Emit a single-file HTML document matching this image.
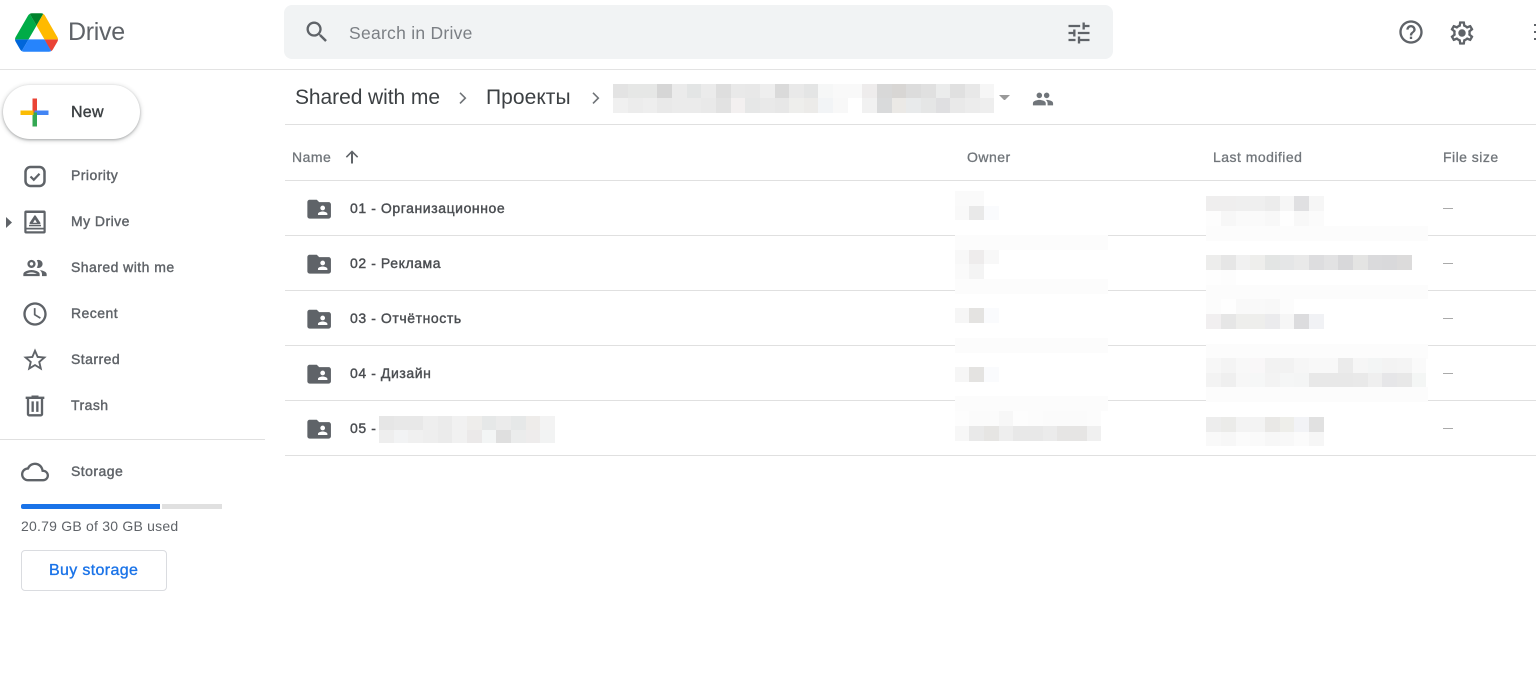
<!DOCTYPE html>
<html lang="en"><head><meta charset="utf-8"><title>Drive</title>
<style>
html,body{margin:0;padding:0;background:#fff}
body{position:relative;width:1536px;height:684px;overflow:hidden;font-family:"Liberation Sans","Noto Sans CJK SC",sans-serif;color:#5f6368}
.a{position:absolute}
.t{position:absolute;white-space:nowrap;line-height:20px;height:20px}
.n{font-size:14px;color:#5f6368;left:71px;letter-spacing:.45px;-webkit-text-stroke:.4px #5f6368}
.h{font-size:14px;color:#70757a;top:147px;letter-spacing:.47px;-webkit-text-stroke:.3px #70757a}
.f{font-size:14px;color:#4a4d51;left:350px;letter-spacing:.58px;-webkit-text-stroke:.4px #4a4d51}
.l{position:absolute;height:1px;background:#e0e0e0;left:285px;right:0}
.d{position:absolute;left:1443px;width:10px;height:1.5px;background:#aaa}
.r{position:absolute;display:flex;height:14.67px}
.r b{display:block;width:14.67px;height:100%;flex:none}
.bd{position:absolute;background:#fcfcfc;height:14.5px}
svg{position:absolute;display:block}
</style></head><body>

<svg style="left:14.5px;top:12.5px" width="43" height="39" viewBox="0 0 87.3 78"><path d="m6.6 66.85 3.85 6.65c.8 1.4 1.95 2.5 3.3 3.3l13.75-23.8h-27.5c0 1.55.4 3.1 1.2 4.5z" fill="#0066da"/><path d="m43.65 25-13.75-23.8c-1.35.8-2.5 1.9-3.3 3.3l-25.4 44a9.06 9.06 0 0 0 -1.2 4.5h27.5z" fill="#00ac47"/><path d="m73.55 76.8c1.35-.8 2.5-1.9 3.3-3.3l1.6-2.75 7.65-13.25c.8-1.4 1.2-2.95 1.2-4.5h-27.502l5.852 11.5z" fill="#ea4335"/><path d="m43.65 25 13.75-23.8c-1.35-.8-2.9-1.2-4.5-1.2h-18.5c-1.6 0-3.15.45-4.5 1.2z" fill="#00832d"/><path d="m59.8 53h-32.3l-13.75 23.8c1.35.8 2.9 1.2 4.5 1.2h50.8c1.6 0 3.15-.45 4.5-1.2z" fill="#2684fc"/><path d="m73.4 26.5-12.7-22c-.8-1.4-1.95-2.5-3.3-3.3l-13.75 23.8 16.15 28h27.45c0-1.55-.4-3.1-1.2-4.5z" fill="#ffba00"/></svg>
<div class="t" style="left:68px;top:21px;font-size:25px;line-height:22px;height:22px;color:#5f6368;letter-spacing:-.3px">Drive</div>

<div class="a" style="left:284px;top:5px;width:829px;height:54px;background:#f1f3f4;border-radius:8px"></div>
<svg style="left:302.5px;top:18px" width="28" height="28" viewBox="0 0 24 24" fill="#5f6368"><path d="M15.5 14h-.79l-.28-.27C15.41 12.59 16 11.11 16 9.5 16 5.91 13.09 3 9.5 3S3 5.91 3 9.5 5.91 16 9.5 16c1.61 0 3.09-.59 4.23-1.57l.27.28v.79l5 4.99L20.49 19l-4.99-5zm-6 0C7.01 14 5 11.99 5 9.5S7.01 5 9.5 5 14 7.01 14 9.5 11.99 14 9.5 14z"/></svg>
<div class="t" style="left:349px;top:23px;font-size:17.5px;color:#7b7f84;letter-spacing:.27px">Search in Drive</div>
<svg style="left:1065px;top:19px" width="28" height="28" viewBox="0 0 24 24" fill="#5f6368"><path d="M3 17v2h6v-2H3zM3 5v2h10V5H3zm10 16v-2h8v-2h-8v-2h-2v6h2zM7 9v2H3v2h4v2h2V9H7zm14 4v-2H11v2h10zm-6-4h2V7h4V5h-4V3h-2v6z"/></svg>
<svg style="left:1397px;top:18px" width="28" height="28" viewBox="0 0 24 24" fill="#5f6368"><path d="M11 18h2v-2h-2v2zm1-16C6.48 2 2 6.48 2 12s4.48 10 10 10 10-4.48 10-10S17.52 2 12 2zm0 18c-4.41 0-8-3.59-8-8s3.59-8 8-8 8 3.59 8 8-3.59 8-8 8zm0-14c-2.21 0-4 1.79-4 4h2c0-1.1.9-2 2-2s2 .9 2 2c0 2-3 1.75-3 5h2c0-2.25 3-2.5 3-5 0-2.21-1.79-4-4-4z"/></svg>
<svg style="left:1447.5px;top:18.5px" width="28" height="28" viewBox="0 0 24 24" fill="#5f6368"><path d="M19.43 12.98c.04-.32.07-.64.07-.98s-.03-.66-.07-.98l2.11-1.65c.19-.15.24-.42.12-.64l-2-3.46c-.12-.22-.39-.3-.61-.22l-2.49 1c-.52-.4-1.08-.73-1.69-.98l-.38-2.65C14.46 2.18 14.25 2 14 2h-4c-.25 0-.46.18-.49.42l-.38 2.65c-.61.25-1.17.59-1.69.98l-2.49-1c-.23-.09-.49 0-.61.22l-2 3.46c-.13.22-.07.49.12.64l2.11 1.65c-.04.32-.07.65-.07.98s.03.66.07.98l-2.11 1.65c-.19.15-.24.42-.12.64l2 3.46c.12.22.39.3.61.22l2.49-1c.52.4 1.08.73 1.69.98l.38 2.65c.03.24.24.42.49.42h4c.25 0 .46-.18.49-.42l.38-2.65c.61-.25 1.17-.59 1.69-.98l2.49 1c.23.09.49 0 .61-.22l2-3.46c.12-.22.07-.49-.12-.64l-2.11-1.65zm-1.98-1.71c.04.31.05.52.05.73 0 .21-.02.43-.05.73l-.14 1.13.89.7 1.08.84-.7 1.21-1.27-.51-1.04-.42-.9.68c-.43.32-.84.56-1.25.73l-1.06.43-.16 1.13-.2 1.35h-1.4l-.19-1.35-.16-1.13-1.06-.43c-.43-.18-.83-.41-1.23-.71l-.91-.7-1.06.43-1.27.51-.7-1.21 1.08-.84.89-.7-.14-1.13c-.03-.31-.05-.54-.05-.74s.02-.43.05-.73l.14-1.13-.89-.7-1.08-.84.7-1.21 1.27.51 1.04.42.9-.68c.43-.32.84-.56 1.25-.73l1.06-.43.16-1.13.2-1.35h1.39l.19 1.35.16 1.13 1.06.43c.43.18.83.41 1.23.71l.91.7 1.06-.43 1.27-.51.7 1.21-1.07.85-.89.7.14 1.13z"/><circle cx="12" cy="12" r="3.2"/></svg>
<div class="a" style="left:1534px;top:24px;width:2px;height:2px;background:#5f6368;box-shadow:0 7px 0 #5f6368,0 14px 0 #5f6368"></div>
<div class="a" style="left:0;right:0;top:69px;height:1px;background:#e3e3e3"></div>

<div class="a" style="left:3px;top:85px;width:137px;height:54px;border-radius:27px;background:#fff;box-shadow:0 1px 2px rgba(60,64,67,.3),0 1px 4px 1px rgba(60,64,67,.2)"></div>
<svg style="left:20px;top:98px" width="29" height="29" viewBox="0 0 29 29"><rect x="12.5" y="0.5" width="4.500" height="14" fill="#ea4335"/><rect x="14.5" y="12.5" width="14" height="4.500" fill="#4285f4"/><rect x="12.5" y="14.5" width="4.500" height="14" fill="#34a853"/><rect x="0.5" y="12.5" width="13" height="4.500" fill="#fbbc04"/></svg>
<div class="t" style="left:71px;top:103px;font-size:16px;color:#3c4043;letter-spacing:.25px;-webkit-text-stroke:.4px #3c4043">New</div>

<svg style="left:21px;top:162px" width="28" height="28" viewBox="0 0 28 28" fill="none" stroke="#5f6368"><rect x="4.500" y="5" width="19" height="19" rx="5" stroke-width="2.500"/><path d="M9.500 14.500l3.300 3.300 5.700-6" stroke-width="2.200"/></svg>
<div class="t n" style="top:165px">Priority</div>

<svg style="left:6px;top:217px" width="6" height="11" viewBox="0 0 6 11" fill="#5f6368"><path d="M0 0l6 5.500L0 11z"/></svg>
<svg style="left:21px;top:207.500px" width="28" height="28" viewBox="0 0 28 28"><path fill="#5f6368" fill-rule="evenodd" d="M5 2.500h18c1 0 1.700.7 1.700 1.700v19.600c0 1-.7 1.700-1.700 1.700H5c-1 0-1.700-.7-1.700-1.700V4.200c0-1 .7-1.700 1.700-1.700zM5.500 5v14.800h17V5zM5.500 21.500v1.800h17v-1.800z"/><path fill="#5f6368" stroke="#5f6368" stroke-width="1.800" stroke-linejoin="round" d="M14 8.200l4.600 7H9.400z"/><path fill="#fff" d="M14 11.500l2 3.300h-4z"/><rect x="8" y="16.800" width="12" height="1.500" fill="#5f6368"/></svg>
<div class="t n" style="top:211px">My Drive</div>

<svg style="left:21px;top:254px" width="28" height="28" viewBox="0 0 24 24" fill="#5f6368"><path d="M9 13.750c-2.340 0-7 1.170-7 3.500V19h14v-1.750c0-2.330-4.660-3.500-7-3.500zM4.340 17c.84-.58 2.870-1.250 4.660-1.250s3.820.67 4.660 1.250H4.340zM9 12c1.930 0 3.500-1.570 3.500-3.500S10.930 5 9 5 5.500 6.570 5.500 8.500 7.070 12 9 12zm0-5c.83 0 1.500.67 1.500 1.500S9.830 10 9 10s-1.500-.67-1.500-1.500S8.170 7 9 7zm7.040 6.810c1.160.84 1.960 1.960 1.960 3.440V19h4v-1.750c0-2.020-3.500-3.170-5.960-3.440zM15 12c1.930 0 3.500-1.570 3.500-3.500S16.930 5 15 5c-.54 0-1.040.13-1.500.35.63.89 1 1.980 1 3.150s-.37 2.260-1 3.150c.46.22.96.35 1.500.35z"/></svg>
<div class="t n" style="top:257px">Shared with me</div>

<svg style="left:21px;top:300px" width="28" height="28" viewBox="0 0 24 24" fill="#5f6368"><path d="M11.990 2C6.470 2 2 6.480 2 12s4.470 10 9.990 10C17.520 22 22 17.520 22 12S17.520 2 11.990 2zM12 20c-4.420 0-8-3.580-8-8s3.580-8 8-8 8 3.580 8 8-3.580 8-8 8zm.5-13H11v6l5.250 3.150.75-1.230-4.500-2.670z"/></svg>
<div class="t n" style="top:303px">Recent</div>

<svg style="left:21px;top:346px" width="28" height="28" viewBox="0 0 24 24" fill="#5f6368"><path d="M22 9.240l-7.190-.62L12 2 9.190 8.630 2 9.240l5.460 4.730L5.820 21 12 17.270 18.180 21l-1.630-7.030L22 9.240zM12 15.400l-3.760 2.270 1-4.280-3.320-2.880 4.380-.38L12 6.100l1.710 4.040 4.380.38-3.320 2.880 1 4.280L12 15.400z"/></svg>
<div class="t n" style="top:349px">Starred</div>

<svg style="left:21px;top:392px" width="28" height="28" viewBox="0 0 24 24" fill="#5f6368"><path d="M15 4V3H9v1H4v2h1v13c0 1.100.9 2 2 2h10c1.100 0 2-.9 2-2V6h1V4h-5zm2 15H7V6h10v13zM9 8h2v9H9zm4 0h2v9h-2z"/></svg>
<div class="t n" style="top:395px">Trash</div>

<div class="a" style="left:0;top:439px;width:265px;height:1px;background:#e0e0e0"></div>

<svg style="left:21px;top:458px" width="28" height="28" viewBox="0 0 24 24" fill="#5f6368"><path d="M12 6c2.620 0 4.880 1.860 5.390 4.430l.3 1.500 1.530.11c1.560.1 2.780 1.410 2.780 2.960 0 1.650-1.350 3-3 3H6c-2.210 0-4-1.790-4-4 0-2.050 1.530-3.760 3.560-3.970l1.070-.11.5-.95C8.080 7.140 9.940 6 12 6m0-2C9.110 4 6.600 5.640 5.350 8.040 2.340 8.360 0 10.910 0 14c0 3.310 2.690 6 6 6h13c2.760 0 5-2.240 5-5 0-2.640-2.050-4.780-4.650-4.960C18.670 6.590 15.640 4 12 4z"/></svg>
<div class="t n" style="top:461px">Storage</div>

<div class="a" style="left:21px;top:504px;width:138.500px;height:5px;background:#1a73e8;border-radius:2px 0 0 2px"></div>
<div class="a" style="left:162px;top:504px;width:60px;height:5px;background:#e0e0e0"></div>
<div class="t" style="left:21px;top:516px;font-size:14px;color:#5f6368;letter-spacing:.22px">20.79 GB of 30 GB used</div>
<div class="a" style="left:21px;top:550px;width:144px;height:39px;border:1px solid #dadce0;border-radius:4px"></div>
<div class="t" style="left:49px;top:560.500px;font-size:16px;color:#1a73e8;letter-spacing:.35px;-webkit-text-stroke:.35px #1a73e8">Buy storage</div>

<div class="t" style="left:295px;top:87.500px;font-size:21px;color:#3c4043;letter-spacing:-.07px">Shared with me</div>
<svg style="left:458px;top:91px" width="10" height="14" viewBox="0 0 10 14" fill="none" stroke="#6f7377" stroke-width="1.600"><path d="M2 1.800l5.300 5.300L2 12.400"/></svg>
<div class="t" style="left:486px;top:87.500px;font-size:21px;color:#3c4043;letter-spacing:.05px">Проекты</div>
<svg style="left:591px;top:91px" width="10" height="14" viewBox="0 0 10 14" fill="none" stroke="#6f7377" stroke-width="1.600"><path d="M2 1.800l5.300 5.300L2 12.400"/></svg>

<div class="r" style="left:613.3px;top:83.6px"><b style="background:#e3e3e3"></b><b style="background:#e6e7e6"></b><b style="background:#e6e7e6"></b><b style="background:#d6d6d6"></b><b style="background:#ebebeb"></b><b style="background:#e3e5e5"></b><b style="background:#ebebeb"></b><b style="background:#dedede"></b><b style="background:#e9e9e9"></b><b style="background:#e8e8e8"></b><b style="background:#eee"></b><b style="background:#dadada"></b><b style="background:#e9e9e9"></b><b style="background:#e4e5e5"></b><b style="background:#f6f7f7"></b><b style="background:#f9f9f9"></b><b style="background:#f9f9f9"></b><b style="background:#eeecec"></b><b style="background:#d8d8d8"></b><b style="background:#d8d6d4"></b><b style="background:#dcdcdc"></b><b style="background:#e0e0e0"></b><b style="background:#ebecec"></b><b style="background:#e0e0e0"></b><b style="background:#e8e8e8"></b><b style="background:#f6f6f6"></b></div>
<div class="r" style="left:613.3px;top:98.300px"><b style="background:#f0f0f0"></b><b style="background:#ececec"></b><b style="background:#eee"></b><b style="background:#e9e9e9"></b><b style="background:#ebebeb"></b><b style="background:#ebebeb"></b><b style="background:#e9e9e9"></b><b style="background:#e2e2e2"></b><b style="background:#f3f0f0"></b><b style="background:#e6e7e7"></b><b style="background:#e9e9e9"></b><b style="background:#e7e7e7"></b><b style="background:#eeeeec"></b><b style="background:#ecebe9"></b><b style="background:#f2f4f6"></b><b style="background:#f8f8f8"></b><b style="background:#fff"></b><b style="background:#f1f1f1"></b><b style="background:#d9dadb"></b><b style="background:#ebe9e6"></b><b style="background:#e8eaeb"></b><b style="background:#e5e6e6"></b><b style="background:#dfdfe1"></b><b style="background:#e9e9e9"></b><b style="background:#ececec"></b><b style="background:#eee"></b></div>

<svg style="left:999px;top:94.500px" width="11" height="5.500" viewBox="0 0 11 5.500" fill="#999"><path d="M0 0h11L5.500 5.500z"/></svg>
<svg style="left:1032px;top:87.500px" width="22" height="22" viewBox="0 0 24 24" fill="#70757a"><path d="M16 11c1.660 0 2.990-1.340 2.990-3S17.660 5 16 5c-1.660 0-3 1.340-3 3s1.340 3 3 3zm-8 0c1.660 0 2.990-1.340 2.990-3S9.660 5 8 5C6.340 5 5 6.340 5 8s1.340 3 3 3zm0 2c-2.330 0-7 1.170-7 3.500V19h14v-2.500c0-2.330-4.670-3.500-7-3.500zm8 0c-.29 0-.62.02-.97.05 1.160.84 1.970 1.970 1.970 3.450V19h6v-2.500c0-2.330-4.670-3.500-7-3.500z"/></svg>

<div class="l" style="top:124px"></div>
<div class="t h" style="left:292px">Name</div>
<svg style="left:343px;top:148px" width="18" height="18" viewBox="0 0 18 18" fill="#5f6368"><path d="M8 15.500V5.600L3.900 9.700 2.800 8.600 9 2.400l6.200 6.200-1.100 1.100L10 5.600v9.900z"/></svg>
<div class="t h" style="left:967px">Owner</div>
<div class="t h" style="left:1213px">Last modified</div>
<div class="t h" style="left:1443px">File size</div>
<div class="l" style="top:180px"></div>
<div class="l" style="top:235px"></div>
<div class="l" style="top:290px"></div>
<div class="l" style="top:345px"></div>
<div class="l" style="top:400px"></div>
<div class="l" style="top:455px"></div>

<svg style="left:305px;top:195px" width="28.300" height="28.300" viewBox="0 0 24 24" fill="#5f6368"><path d="M20 6h-8l-2-2H4c-1.100 0-2 .9-2 2v12c0 1.100.9 2 2 2h16c1.100 0 2-.9 2-2V8c0-1.100-.9-2-2-2zm-5 3c1.100 0 2 .9 2 2s-.9 2-2 2-2-.9-2-2 .9-2 2-2zm4 8h-8v-1c0-1.330 2.670-2 4-2s4 .67 4 2v1z"/></svg>
<svg style="left:305px;top:250px" width="28.300" height="28.300" viewBox="0 0 24 24" fill="#5f6368"><path d="M20 6h-8l-2-2H4c-1.100 0-2 .9-2 2v12c0 1.100.9 2 2 2h16c1.100 0 2-.9 2-2V8c0-1.100-.9-2-2-2zm-5 3c1.100 0 2 .9 2 2s-.9 2-2 2-2-.9-2-2 .9-2 2-2zm4 8h-8v-1c0-1.330 2.670-2 4-2s4 .67 4 2v1z"/></svg>
<svg style="left:305px;top:305px" width="28.300" height="28.300" viewBox="0 0 24 24" fill="#5f6368"><path d="M20 6h-8l-2-2H4c-1.100 0-2 .9-2 2v12c0 1.100.9 2 2 2h16c1.100 0 2-.9 2-2V8c0-1.100-.9-2-2-2zm-5 3c1.100 0 2 .9 2 2s-.9 2-2 2-2-.9-2-2 .9-2 2-2zm4 8h-8v-1c0-1.330 2.670-2 4-2s4 .67 4 2v1z"/></svg>
<svg style="left:305px;top:360px" width="28.300" height="28.300" viewBox="0 0 24 24" fill="#5f6368"><path d="M20 6h-8l-2-2H4c-1.100 0-2 .9-2 2v12c0 1.100.9 2 2 2h16c1.100 0 2-.9 2-2V8c0-1.100-.9-2-2-2zm-5 3c1.100 0 2 .9 2 2s-.9 2-2 2-2-.9-2-2 .9-2 2-2zm4 8h-8v-1c0-1.330 2.670-2 4-2s4 .67 4 2v1z"/></svg>
<svg style="left:305px;top:415px" width="28.300" height="28.300" viewBox="0 0 24 24" fill="#5f6368"><path d="M20 6h-8l-2-2H4c-1.100 0-2 .9-2 2v12c0 1.100.9 2 2 2h16c1.100 0 2-.9 2-2V8c0-1.100-.9-2-2-2zm-5 3c1.100 0 2 .9 2 2s-.9 2-2 2-2-.9-2-2 .9-2 2-2zm4 8h-8v-1c0-1.330 2.670-2 4-2s4 .67 4 2v1z"/></svg>

<div class="t f" style="top:198px">01 - Организационное</div>
<div class="t f" style="top:253px">02 - Реклама</div>
<div class="t f" style="top:308px">03 - Отчётность</div>
<div class="t f" style="top:363px">04 - Дизайн</div>
<div class="t f" style="top:418px">05 -</div>

<div class="r" style="left:379px;top:415.7px"><b style="background:#e6e6e6"></b><b style="background:#e8e8e8"></b><b style="background:#e8e8e8"></b><b style="background:#eee"></b><b style="background:#ebebeb"></b><b style="background:#f1f1f1"></b><b style="background:#eeedeb"></b><b style="background:#e6e8e8"></b><b style="background:#ebebeb"></b><b style="background:#e6e8e8"></b><b style="background:#eeecea"></b><b style="background:#f3f3f3"></b></div>
<div class="r" style="left:379px;top:430.3px;height:12.4px"><b style="background:#eee"></b><b style="background:#f2f3f4"></b><b style="background:#f0f0f0"></b><b style="background:#eee"></b><b style="background:#ebebeb"></b><b style="background:#f1f1f1"></b><b style="background:#ebe9e9"></b><b style="background:#f3f5f5"></b><b style="background:#dfdfdf"></b><b style="background:#ebecec"></b><b style="background:#eeecec"></b><b style="background:#f2f3f3"></b></div>

<div class="r" style="left:954.8px;top:191px"><b style="background:#fafafa"></b><b style="background:#fafafa"></b></div>
<div class="r" style="left:954.8px;top:205.7px"><b style="background:#f9f9f9"></b><b style="background:#e9e9e9"></b><b style="background:#fafbfd"></b></div>
<div class="bd" style="left:955px;width:153px;top:235px"></div>
<div class="r" style="left:954.8px;top:249.7px"><b style="background:#f8f8f8"></b><b style="background:#eeecec"></b><b style="background:#f8f8f8"></b></div>
<div class="r" style="left:954.8px;top:264.3px"><b style="background:#fafafa"></b><b style="background:#f4f4f4"></b></div>
<div class="bd" style="left:955px;width:153px;top:279px"></div>
<div class="r" style="left:954.8px;top:308.3px"><b style="background:#f6f6f6"></b><b style="background:#e4e3e1"></b><b style="background:#fafbfd"></b></div>
<div class="bd" style="left:955px;width:153px;top:338px"></div>
<div class="r" style="left:954.8px;top:367px"><b style="background:#f6f6f6"></b><b style="background:#e4e3e1"></b><b style="background:#fafbfd"></b></div>
<div class="bd" style="left:955px;width:153px;top:396.3px"></div>
<div class="r" style="left:954.8px;top:411px"><b style="background:#fdfdfd"></b><b style="background:#fbfbfb"></b><b style="background:#fbfbfb"></b><b style="background:#f7f7f7"></b><b style="background:#fdfdfd"></b><b style="background:#fcfcfc"></b><b style="background:#fbfbfb"></b><b style="background:#fbfbfb"></b><b style="background:#fbfbfb"></b><b style="background:#fcfcfc"></b></div>
<div class="r" style="left:954.8px;top:426px"><b style="background:#f7f7f7"></b><b style="background:#e9e9e9"></b><b style="background:#e6e5e3"></b><b style="background:#eee"></b><b style="background:#e8e8e8"></b><b style="background:#e8e8e8"></b><b style="background:#ebebeb"></b><b style="background:#e6e5e4"></b><b style="background:#e6e5e4"></b><b style="background:#f0f0f0"></b></div>

<div class="r" style="left:1206.4px;top:196px"><b style="background:#efeeee"></b><b style="background:#efeeee"></b><b style="background:#efefef"></b><b style="background:#efefef"></b><b style="background:#ececec"></b><b style="background:#f6f6f6"></b><b style="background:#e0e0e2"></b><b style="background:#f6f6f6"></b></div>
<div class="r" style="left:1206.4px;top:211px"><b style="background:#fdfdfd"></b><b style="background:#f7f7f7"></b><b style="background:#fafafa"></b><b style="background:#fafafa"></b><b style="background:#f8f8f8"></b><b style="background:#fefefe"></b><b style="background:#f8f8f8"></b><b style="background:#fbfbfb"></b></div>
<div class="bd" style="left:1206px;width:222px;top:226px"></div>
<div class="r" style="left:1206.4px;top:255px"><b style="background:#ededec"></b><b style="background:#e6e6e6"></b><b style="background:#f1f1f1"></b><b style="background:#eeeeec"></b><b style="background:#e3e5e4"></b><b style="background:#e5e6e7"></b><b style="background:#e9e9e9"></b><b style="background:#dddddf"></b><b style="background:#e2e2e3"></b><b style="background:#d8d8da"></b><b style="background:#e4e4e3"></b><b style="background:#dadadc"></b><b style="background:#d9d9db"></b><b style="background:#dcdbdb"></b></div>
<div class="r" style="left:1206.4px;top:270px"><b style="background:#fefefe"></b><b style="background:#fdfdfd"></b></div>
<div class="bd" style="left:1206px;width:222px;top:284.7px"></div>
<div class="r" style="left:1206.4px;top:299.3px"><b style="background:#fcfcfc"></b><b style="background:#fefefe"></b><b style="background:#f9f9f9"></b><b style="background:#f9f9f9"></b><b style="background:#f8f8f8"></b><b style="background:#fcfcfc"></b></div>
<div class="r" style="left:1206.4px;top:314px"><b style="background:#f1eff0"></b><b style="background:#e6e6e6"></b><b style="background:#eeeeec"></b><b style="background:#eeeeec"></b><b style="background:#ebebed"></b><b style="background:#f6f6f6"></b><b style="background:#dcdcde"></b><b style="background:#f1f2f5"></b></div>
<div class="bd" style="left:1206px;width:222px;top:344px"></div>
<div class="r" style="left:1206.4px;top:358.3px"><b style="background:#f7f7f7"></b><b style="background:#f4f4f4"></b><b style="background:#f8f8f8"></b><b style="background:#f9f7f8"></b><b style="background:#f2f2f2"></b><b style="background:#f2f2f2"></b><b style="background:#f6f6f6"></b><b style="background:#f8f8f8"></b><b style="background:#f8f8f8"></b><b style="background:#ebebeb"></b><b style="background:#f6f6f6"></b><b style="background:#f3f5f5"></b><b style="background:#f3f3f3"></b><b style="background:#f4f4f4"></b><b style="background:#fafafa"></b></div>
<div class="r" style="left:1206.4px;top:373px"><b style="background:#f3f3f3"></b><b style="background:#efefef"></b><b style="background:#f7f7f7"></b><b style="background:#f6f7f7"></b><b style="background:#f3f3f3"></b><b style="background:#f5f6f6"></b><b style="background:#f4f5f5"></b><b style="background:#e8e8e8"></b><b style="background:#e8e8e8"></b><b style="background:#e8e8e8"></b><b style="background:#e9e9e9"></b><b style="background:#efefef"></b><b style="background:#e6e6e8"></b><b style="background:#e8e8e8"></b><b style="background:#f4f6f5"></b></div>
<div class="bd" style="left:1206px;width:222px;top:387.3px"></div>
<div class="r" style="left:1206.4px;top:417px"><b style="background:#ededed"></b><b style="background:#ebebe9"></b><b style="background:#f3f3f3"></b><b style="background:#f3f3f3"></b><b style="background:#e9e8e6"></b><b style="background:#eeeeea"></b><b style="background:#f2f3f6"></b><b style="background:#e1e1e1"></b></div>
<div class="r" style="left:1206.4px;top:431.6px"><b style="background:#f9f9f9"></b><b style="background:#f7f7f7"></b><b style="background:#fbfbfb"></b><b style="background:#fafafa"></b><b style="background:#f7f7f7"></b><b style="background:#f8f8f8"></b><b style="background:#fbfbfb"></b><b style="background:#f6f6f6"></b></div>

<div class="d" style="top:207.500px"></div>
<div class="d" style="top:262.500px"></div>
<div class="d" style="top:317.500px"></div>
<div class="d" style="top:372.500px"></div>
<div class="d" style="top:427.500px"></div>
</body></html>
